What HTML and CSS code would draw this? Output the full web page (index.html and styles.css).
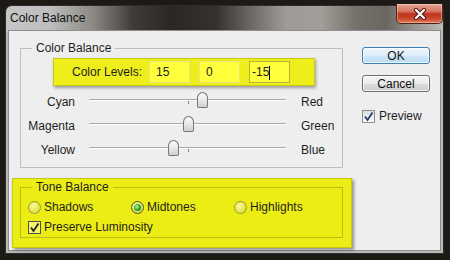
FILE: index.html
```html
<!DOCTYPE html>
<html>
  <head>
    <meta charset="UTF-8">
    <link rel="stylesheet" href="styles.css">
    <title>Color Balance</title>
  </head>
  <body>
    <div class="window">
      <div class="titlebar">
        <span class="title">Color Balance</span>
        <span class="close">
          <svg width="16" height="12" viewBox="0 0 16 12">
            <path d="M4 2 L12 10 M12 2 L4 10" stroke="#4a1c12" stroke-width="4.2" stroke-linecap="round"/>
            <path d="M4 2 L12 10 M12 2 L4 10" stroke="#ffffff" stroke-width="2.2" stroke-linecap="round"/>
          </svg>
        </span>
      </div>
      <div class="client">
        <div class="main">
          <fieldset class="group">
            <legend>Color Balance</legend>
            <div class="levels">
              <span class="levels-label">Color Levels:</span>
              <div class="field">15</div>
              <div class="field">0</div>
              <div class="field active">-15<span class="caret"></span></div>
            </div>
            <div class="slider-row">
              <span class="from">Cyan</span>
              <div class="track"><span class="thumb" style="left: 57.5%"></span></div>
              <span class="to">Red</span>
            </div>
            <div class="slider-row">
              <span class="from">Magenta</span>
              <div class="track"><span class="thumb" style="left: 50%"></span></div>
              <span class="to">Green</span>
            </div>
            <div class="slider-row">
              <span class="from">Yellow</span>
              <div class="track"><span class="thumb" style="left: 42.5%"></span></div>
              <span class="to">Blue</span>
            </div>
          </fieldset>

          <div class="tone">
            <fieldset class="group">
              <legend>Tone Balance</legend>
              <div class="radios">
                <label class="radio-item"><span class="radio"></span>Shadows</label>
                <label class="radio-item"><span class="radio on"></span>Midtones</label>
                <label class="radio-item"><span class="radio"></span>Highlights</label>
              </div>
              <label class="check-item">
                <span class="check">
                  <svg width="11" height="11" viewBox="0 0 11 11"><path d="M2 5.5 L4.5 9 L9.5 1.5" fill="none" stroke="#1a1f2e" stroke-width="1.8"/></svg>
                </span>Preserve Luminosity
              </label>
            </fieldset>
          </div>
        </div>

        <div class="side">
          <button class="btn default">OK</button>
          <button class="btn">Cancel</button>
          <label class="check-item preview">
            <span class="check">
              <svg width="11" height="11" viewBox="0 0 11 11"><path d="M2 5.5 L4.5 9 L9.5 1.5" fill="none" stroke="#2b3b6e" stroke-width="1.8"/></svg>
            </span>Preview
          </label>
        </div>
      </div>
    </div>
  </body>
</html>
```

FILE: styles.css
```css
body {
    margin: 0;
    width: 450px;
    height: 260px;
    overflow: hidden;
    background: #1d1915;
    font-family: "Liberation Sans", Arial, sans-serif;
    font-size: 12px;
    color: #1e1e1e;
}

.window {
    margin: 5px 0 0 5px;
    width: 439px;
    height: 249px;
    box-sizing: border-box;
    border: 1px solid #2e2c2a;
    border-radius: 7px 7px 0 0;
    padding: 0 2px 2px;
    display: flex;
    flex-direction: column;
    background:
        linear-gradient(90deg, #c6c6c6 0%, #bebebe 10%, #8c8984 20%, #403b36 29%, #2c2722 38%, #36312c 48%,
            #6c6863 56%, #9e9a95 64%, #a29e99 72%, #75716b 80%, #6a6660 87%, #9a9690 94%, #bcbcbc 100%) top / 100% 26px no-repeat,
        #b9b9b9;
}

.titlebar {
    height: 24px;
    display: flex;
    align-items: flex-start;
}

.title {
    align-self: center;
    padding-left: 2px;
    color: #111;
}

.close {
    margin: -2px -2px 0 auto;
    width: 47px;
    height: 20px;
    box-sizing: border-box;
    border: 1px solid #4e2118;
    border-top: none;
    border-radius: 0 0 5px 5px;
    display: flex;
    align-items: center;
    justify-content: center;
    background: linear-gradient(#e6a898, #d6705c 40%, #bf3420 52%, #c8452c 75%, #e27a5c);
    box-shadow: inset 0 0 0 1px rgba(255, 220, 200, 0.45);
}

.client {
    flex: 1;
    display: flex;
    padding: 10px 0 0 3px;
    border: 1px solid #8d8d8d;
    background: #eeeeee;
}

.main {
    width: 340px;
    display: flex;
    flex-direction: column;
}

fieldset.group {
    margin: 0;
    padding: 3px 0 5px;
    width: 323px;
    min-width: 0;
    box-sizing: border-box;
    border: 1px solid rgba(0, 0, 0, 0.2);
}

fieldset.group legend {
    margin-left: 11px;
    padding: 0 4px;
    line-height: 14px;
}

.main > fieldset.group {
    margin-left: 8px;
}

.levels {
    margin-left: 32px;
    width: 262px;
    height: 28px;
    box-sizing: border-box;
    padding-left: 18px;
    display: flex;
    align-items: center;
    border: 1px solid #c9c916;
    background: #eeee1c;
    box-shadow: 1px 2px 3px rgba(0, 0, 0, 0.35);
    margin-bottom: 4px;
}

.levels-label {
    width: 77px;
    flex: none;
}

.field {
    width: 41px;
    height: 22px;
    box-sizing: border-box;
    padding-left: 6px;
    line-height: 20px;
    border: 1px solid #e6e67c;
    background: #ffff3c;
    color: #222;
}

.field + .field {
    margin-left: 9px;
}

.field.active {
    padding-left: 2px;
    border-color: #b4b43a;
}

.caret {
    display: inline-block;
    width: 1px;
    height: 14px;
    background: #000;
    vertical-align: middle;
}

.slider-row {
    height: 24px;
    display: flex;
    align-items: center;
}

.from {
    width: 54px;
    text-align: right;
}

.track {
    position: relative;
    margin-left: 14px;
    width: 197px;
    align-self: stretch;
}

.track::before {
    content: "";
    position: absolute;
    left: 0;
    right: 0;
    top: 9px;
    height: 1px;
    background: #a9a9a9;
    border-bottom: 1px solid #ffffff;
}

.track::after {
    content: "";
    position: absolute;
    left: 50%;
    top: 11px;
    width: 1px;
    height: 3px;
    background: #8a8a8a;
}

.thumb {
    position: absolute;
    top: 2px;
    z-index: 1;
    width: 11px;
    height: 16px;
    margin-left: -5px;
    box-sizing: border-box;
    border: 1px solid #767676;
    border-radius: 50% 50% 2px 2px / 40% 40% 2px 2px;
    background: linear-gradient(#fdfdfd, #e8e8e8 50%, #d0d0d0);
}

.to {
    margin-left: 15px;
}

.tone {
    margin-top: 10px;
    width: 340px;
    height: 70px;
    box-sizing: border-box;
    padding: 1px 8px 0 7px;
    border: 1px solid #c8c812;
    background: #eded16;
    box-shadow: 2px 2px 3px rgba(0, 0, 0, 0.4);
}

.tone fieldset.group {
    padding-bottom: 0;
}

.radios {
    height: 20px;
    display: flex;
    align-items: center;
    padding-left: 7px;
}

.radio-item {
    width: 103px;
    display: flex;
    align-items: center;
    gap: 3px;
}

.radio {
    position: relative;
    width: 13px;
    height: 13px;
    box-sizing: border-box;
    border-radius: 50%;
    border: 1px solid rgba(70, 70, 0, 0.45);
    background: radial-gradient(circle at 40% 35%, #fbfb96, #d2d22c);
}

.radio.on {
    border-color: #50502a;
}

.radio.on::after {
    content: "";
    position: absolute;
    inset: 2px;
    border-radius: 50%;
    background: radial-gradient(circle at 40% 40%, #b4f4a8, #22a322 55%, #0b560b);
}

.check-item {
    height: 20px;
    display: flex;
    align-items: center;
    gap: 3px;
    padding-left: 7px;
}

.check {
    width: 13px;
    height: 13px;
    box-sizing: border-box;
    border: 1px solid #505050;
    background: #f6f664;
    display: flex;
    align-items: center;
    justify-content: center;
}

.side {
    margin: 6px 0 0 10px;
    width: 68px;
    display: flex;
    flex-direction: column;
}

.btn {
    height: 17px;
    padding: 0;
    font-family: inherit;
    font-size: 12px;
    line-height: 14px;
    color: #111;
    border: 1px solid #707070;
    border-radius: 3px;
    background: linear-gradient(#f4f4f4, #ebebeb 50%, #dcdcdc 50%, #cfcfcf);
    box-shadow: inset 0 0 0 1px rgba(255, 255, 255, 0.7);
}

.btn.default {
    border-color: #3c7fb1;
    background: linear-gradient(#eef6fc, #e0eef9 50%, #cfe6f7 50%, #bcdcf4);
}

.btn + .btn {
    margin-top: 11px;
}

.preview {
    margin-top: 14px;
    padding-left: 0;
    gap: 4px;
}

.preview .check {
    border-color: #8e8f8f;
    background: linear-gradient(#d8dde4, #fafafa);
}
```
